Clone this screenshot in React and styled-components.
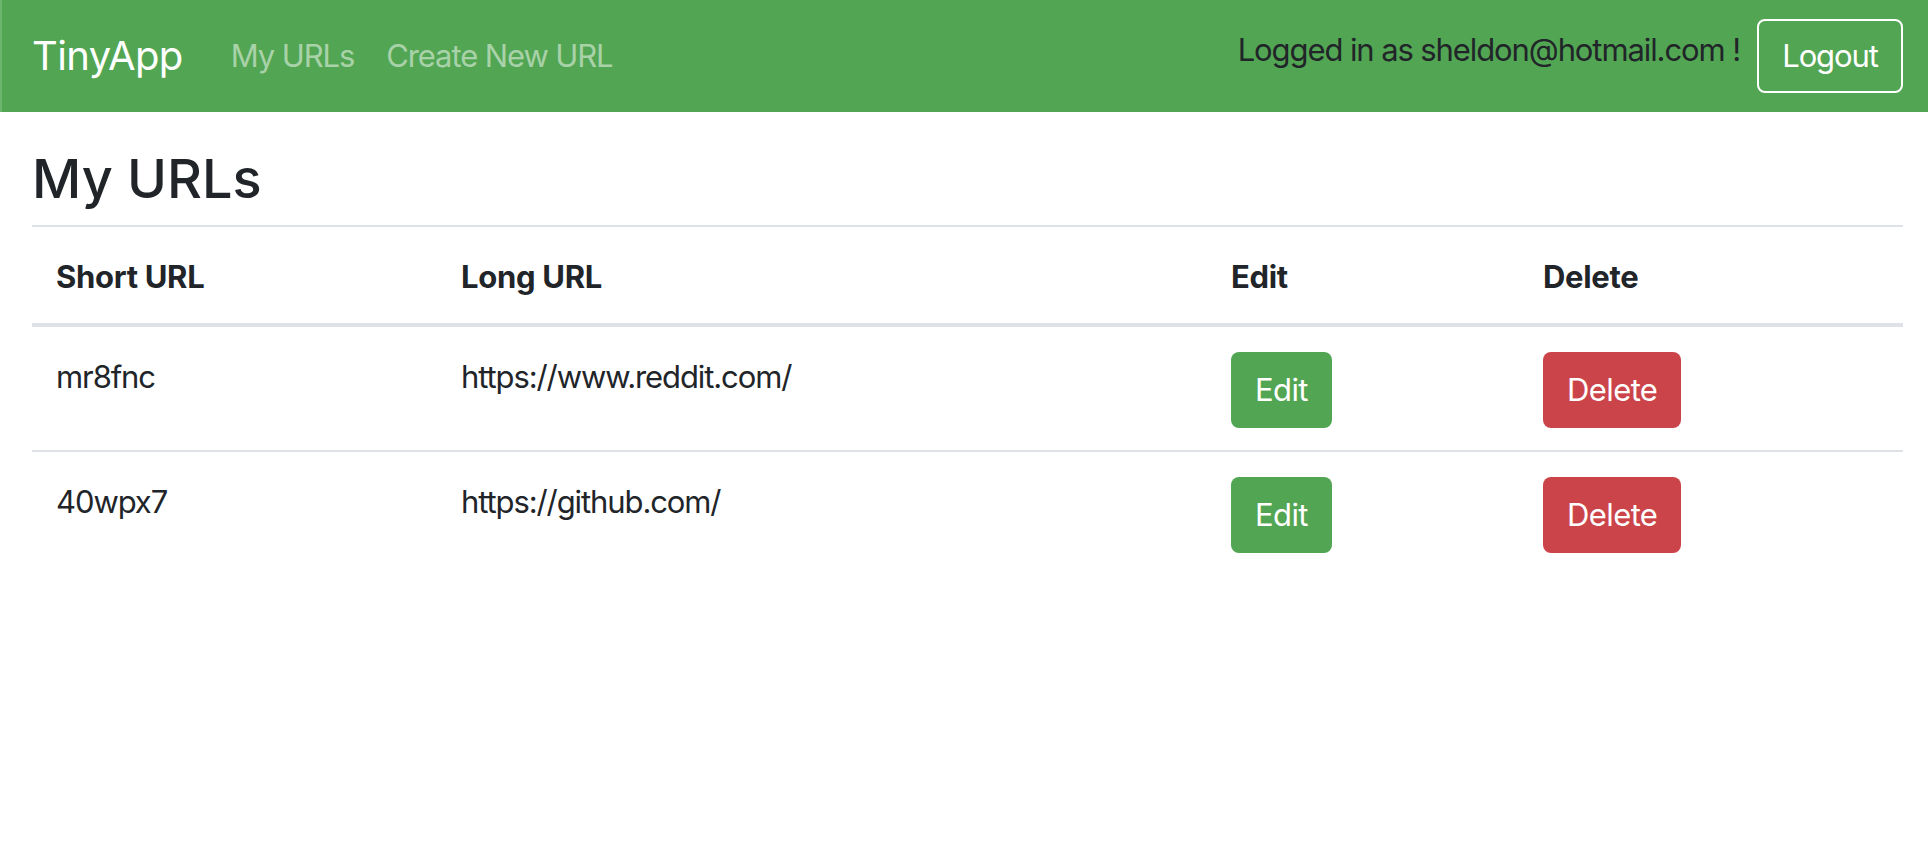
import styled, { createGlobalStyle } from 'styled-components';

const GlobalStyle = createGlobalStyle`
  body {
    margin: 0;
    background: #fff;
    color: #212529;
    font-family: Inter, "Noto Sans", "Liberation Sans", sans-serif;
    font-size: 31px;
    letter-spacing: -1.1px;
    line-height: 48px;
  }
`;

const Navbar = styled.nav`
  display: flex;
  align-items: center;
  height: 112px;
  box-sizing: border-box;
  padding: 16px 25px 16px 32px;
  background-color: #52a552;
  border-left: 2px solid #6cb56c;
`;

const Brand = styled.a`
  font-size: 40px;
  letter-spacing: -0.6px;
  line-height: 60px;
  padding: 10px 0;
  margin-right: 32px;
  margin-left: -2px;
  color: #fff;
  text-decoration: none;
`;

const NavLinks = styled.div`
  display: flex;
  flex: 1;
`;

const NavLink = styled.a`
  padding: 16px;
  color: rgba(255, 255, 255, 0.5);
  text-decoration: none;
`;

const UserInfo = styled.span`
  color: #212529;
  margin-right: 17px;
  margin-top: -12px;
`;

const OutlineButton = styled.button`
  font: inherit;
  letter-spacing: inherit;
  color: #fff;
  background: transparent;
  border: 2px solid #fff;
  border-radius: 8px;
  padding: 6px 22px;
  height: 74px;
  width: 146px;
`;

const Main = styled.main`
  padding: 32px 25px 0 32px;
`;

const Title = styled.h1`
  font-size: 54px;
  font-weight: 500;
  letter-spacing: 0;
  line-height: 1.2;
  margin: 0 0 13px;
  padding-top: 3px;
`;

const Table = styled.table`
  width: 100%;
  table-layout: fixed;
  border-collapse: collapse;
`;

const Th = styled.th`
  box-sizing: border-box;
  width: ${p => p.$width || 'auto'};
  text-align: left;
  font-weight: 700;
  letter-spacing: -0.3px;
  padding: 26px 24px 22px;
  border-top: 2px solid #dee2e6;
  border-bottom: 4px solid #dee2e6;
`;

const Td = styled.td`
  padding: 26px 24px 22px;
  vertical-align: top;
  border-top: ${p => (p.$first ? 'none' : '2px solid #dee2e6')};
`;

const ActionButton = styled.button`
  font: inherit;
  letter-spacing: -0.6px;
  color: #fff;
  background-color: ${p => (p.$danger ? '#cb444a' : '#52a552')};
  border: 2px solid transparent;
  border-radius: 8px;
  height: 76px;
  padding: 0 22px;
  margin-top: -1px;
  cursor: pointer;
`;

const urls = [
  { id: 'mr8fnc', long: 'https://www.reddit.com/' },
  { id: '40wpx7', long: 'https://github.com/' },
];

export default function App() {
  return (
    <>
      <GlobalStyle />
      <Navbar>
        <Brand href="#">TinyApp</Brand>
        <NavLinks>
          <NavLink href="#">My URLs</NavLink>
          <NavLink href="#">Create New URL</NavLink>
        </NavLinks>
        <UserInfo>Logged in as sheldon@hotmail.com !</UserInfo>
        <OutlineButton>Logout</OutlineButton>
      </Navbar>
      <Main>
        <Title>My URLs</Title>
        <Table>
          <thead>
            <tr>
              <Th $width="405px">Short URL</Th>
              <Th $width="770px">Long URL</Th>
              <Th $width="312px">Edit</Th>
              <Th>Delete</Th>
            </tr>
          </thead>
          <tbody>
            {urls.map((url, i) => (
              <tr key={url.id}>
                <Td $first={i === 0}>{url.id}</Td>
                <Td $first={i === 0}>{url.long}</Td>
                <Td $first={i === 0}><ActionButton>Edit</ActionButton></Td>
                <Td $first={i === 0}><ActionButton $danger>Delete</ActionButton></Td>
              </tr>
            ))}
          </tbody>
        </Table>
      </Main>
    </>
  );
}
